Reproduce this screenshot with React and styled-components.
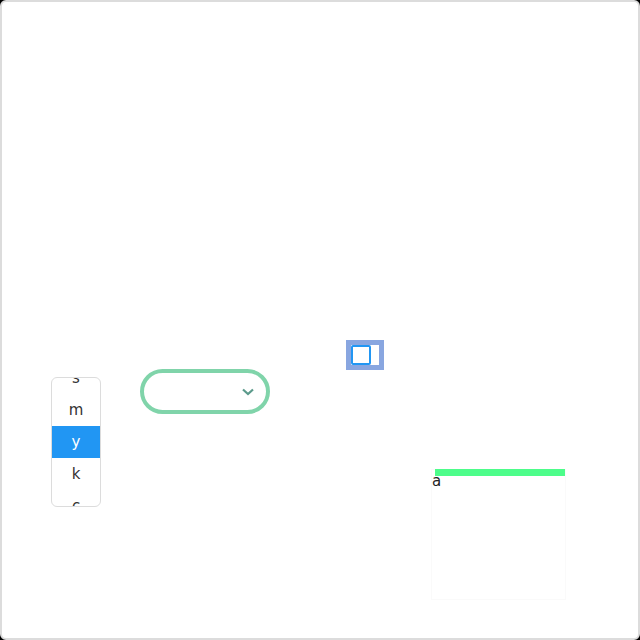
import React from "react";
import styled, { createGlobalStyle } from "styled-components";

const Global = createGlobalStyle`
  html, body { margin: 0; padding: 0; background: #000; }
  body { font-family: "DejaVu Sans", Verdana, sans-serif; }
`;

const Frame = styled.div`
  box-sizing: border-box;
  width: 640px;
  height: 640px;
  background: #fff;
  border: 2px solid #dcdcdc;
  border-radius: 6px;
  padding: 338px 0 0 49px;
  overflow: hidden;
`;

const Row = styled.div`
  display: flex;
  align-items: flex-start;
`;

const Slot = styled.div`
  margin-top: ${(p) => p.$top || 0}px;
  margin-left: ${(p) => p.$left || 0}px;
  flex: none;
`;

const Picker = styled.div`
  box-sizing: border-box;
  width: 50px;
  height: 130px;
  border: 1px solid #dcdcdc;
  border-radius: 6px;
  overflow: hidden;
  background: #fff;
`;

const Track = styled.ul`
  list-style: none;
  margin: -16px 0 0;
  padding: 0;
`;

const Item = styled.li`
  height: 32px;
  display: flex;
  align-items: center;
  justify-content: center;
  font-size: 15px;
  color: ${(p) => (p.$active ? "#fff" : "#333")};
  background: ${(p) => (p.$active ? "#2196f3" : "transparent")};
`;

const Select = styled.div`
  box-sizing: border-box;
  width: 130px;
  height: 45px;
  border: 4px solid #80d4aa;
  border-radius: 999px;
  display: flex;
  align-items: center;
  justify-content: flex-end;
  padding-right: 11px;
  background: #fff;
`;

const Toggle = styled.div`
  box-sizing: border-box;
  width: 38px;
  height: 30px;
  padding: 5px;
  background: #89a6e0;
  display: flex;
`;

const ToggleInner = styled.div`
  flex: 1;
  background: #fff;
  display: flex;
`;

const Check = styled.div`
  box-sizing: border-box;
  width: 20px;
  height: 20px;
  border: 2px solid #2196f3;
  border-radius: 2px;
  background: #fff;
`;

const Panel = styled.div`
  position: relative;
  box-sizing: border-box;
  width: 135px;
  height: 131px;
  border: 1px solid #fafafa;
  font-size: 15px;
  color: #222;
  line-height: 18px;
`;

const Bar = styled.div`
  position: absolute;
  top: -1px;
  left: 3px;
  width: 130px;
  height: 7px;
  background: #4dfd8a;
`;

const Label = styled.span`
  display: block;
  padding: 2px 0 0 0;
`;

export default function App() {
  const items = ["s", "m", "y", "k", "c"];
  return (
    <>
      <Global />
      <Frame>
        <Row>
          <Slot $top={37}>
            <Picker>
              <Track>
                {items.map((it) => (
                  <Item key={it} $active={it === "y"}>
                    {it}
                  </Item>
                ))}
              </Track>
            </Picker>
          </Slot>
          <Slot $top={29} $left={39}>
            <Select>
              <svg width="14" height="10" viewBox="0 0 14 10">
                <path
                  d="M2 2.5 L7 7 L12 2.5"
                  fill="none"
                  stroke="#5b9a8b"
                  strokeWidth="2.2"
                />
              </svg>
            </Select>
          </Slot>
          <Slot $left={76}>
            <Toggle>
              <ToggleInner>
                <Check />
              </ToggleInner>
            </Toggle>
          </Slot>
          <Slot $top={129} $left={47}>
            <Panel>
              <Label>a</Label>
              <Bar />
            </Panel>
          </Slot>
        </Row>
      </Frame>
    </>
  );
}
